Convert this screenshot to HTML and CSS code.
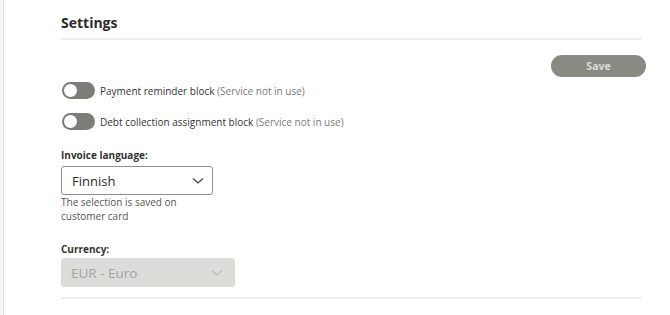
FILE: index.html
```html
<!DOCTYPE html>
<html>
<head>
<meta charset="utf-8">
<link rel="stylesheet" href="styles.css">
</head>
<body>
<div class="page">
  <div class="edge"></div>
  <main class="content">
    <h1 class="title">Settings</h1>
    <div class="actions"><button class="save">Save</button></div>
    <div class="toggle-row">
      <span class="switch"><span class="knob"></span></span>
      <span class="label">Payment reminder block <span class="muted">(Service not in use)</span></span>
    </div>
    <div class="toggle-row">
      <span class="switch"><span class="knob"></span></span>
      <span class="label">Debt collection assignment block <span class="muted">(Service not in use)</span></span>
    </div>
    <div class="field">
      <div class="field-label">Invoice language:</div>
      <div class="select">
        <span>Finnish</span>
        <svg class="chev" width="12" height="8" viewBox="0 0 12 8"><path d="M1 1.5 L6 6 L11 1.5" fill="none" stroke="#444" stroke-width="1.3"/></svg>
      </div>
      <div class="help">The selection is saved on<br>customer card</div>
    </div>
    <div class="field currency">
      <div class="field-label">Currency:</div>
      <div class="select disabled">
        <span>EUR - Euro</span>
        <svg class="chev" width="12" height="8" viewBox="0 0 12 8"><path d="M1 1.5 L6 6 L11 1.5" fill="none" stroke="#bdbdba" stroke-width="1.3"/></svg>
      </div>
    </div>
    <div class="rule"></div>
  </main>
</div>
</body>
</html>
```
FILE: styles.css
```css
html, body { margin: 0; padding: 0; background: #fff; }
body { font-family: "Open Sans", "Noto Sans", sans-serif; color: #333; }
.page { display: flex; height: 315px; }
.edge { width: 3px; background: #f7f7f4; border-right: 1px solid #e3e3df; flex: none; }
.content { margin-left: 57px; width: 580px; }
.title {
  margin: 0; padding-top: 12px; height: 26px;
  font-size: 14px; font-weight: 700; color: #2b2b2b; line-height: 22px;
  border-bottom: 2px solid #ececec;
}
.actions { display: flex; justify-content: flex-end; margin-top: 15px; margin-right: -5px; }
.save {
  width: 95px; height: 22px; border: none; border-radius: 11px;
  background: #8a8a85; color: #dcdcd8; font-family: inherit; font-size: 10.5px; font-weight: 700; padding: 0;
}
.toggle-row { display: flex; align-items: center; gap: 5px; margin-left: 1px; height: 17px; margin-top: 5px; }
.toggle-row + .toggle-row { margin-top: 14px; }
.switch {
  width: 33px; height: 17px; border-radius: 9px; background: #7d7d78; flex: none;
  display: flex; align-items: center; padding-left: 1px; box-sizing: border-box;
}
.knob { width: 15px; height: 15px; border-radius: 50%; background: #fff; box-sizing: border-box; border: 1px solid #6e6e6a; }
.label { font-size: 10px; color: #333; }
.muted { color: #7a7a7a; }
.field { margin-top: 18px; }
.field-label { font-size: 10px; font-weight: 700; color: #333; line-height: 14px; }
.select {
  margin-top: 4px; width: 152px; height: 29px; box-sizing: border-box;
  border: 1px solid #8e8e8e; border-radius: 3px; display: flex; align-items: center; justify-content: space-between;
  padding: 0 8px 0 10px; font-size: 13px; color: #2b2b2b;
}
.help { font-size: 10px; color: #555; line-height: 14px; margin-top: 0; }
.currency { margin-top: 19px; }
.currency .select { margin-top: 2px; }
.select.disabled { width: 174px; border: none; background: #dcdcd9; color: #a3a3a0; padding-right: 12px; font-size: 13.5px; }
.rule { margin-top: 10px; height: 2px; background: #ececec; }
```
